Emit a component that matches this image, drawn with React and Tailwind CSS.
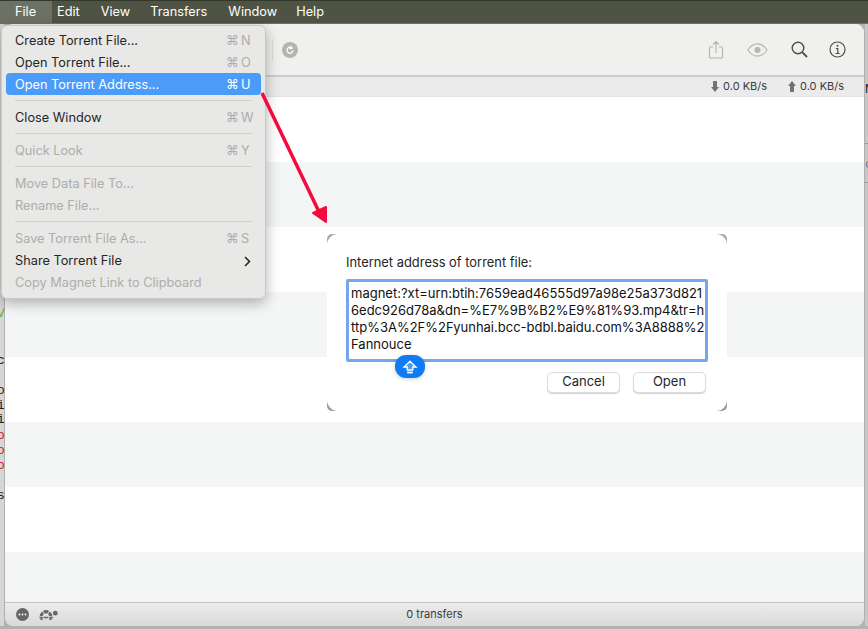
const font = '[font-family:Inter,"Liberation_Sans",sans-serif]';

const menuItems = [
  { label: 'Create Torrent File...', key: 'N' },
  { label: 'Open Torrent File...', key: 'O' },
  { label: 'Open Torrent Address...', key: 'U', active: true },
  { sep: true },
  { label: 'Close Window', key: 'W' },
  { sep: true },
  { label: 'Quick Look', key: 'Y', off: true },
  { sep: true },
  { label: 'Move Data File To...', off: true },
  { label: 'Rename File...', off: true },
  { sep: true },
  { label: 'Save Torrent File As...', key: 'S', off: true },
  { label: 'Share Torrent File', arrow: true },
  { label: 'Copy Magnet Link to Clipboard', off: true },
];

// glyph ends of the terminal window behind, only a few pixels show
const behindLeft = [
  { ch: 'V', gap: 283, color: 'text-[#6fae2c]' },
  { ch: 'c', gap: 33, color: 'text-[#222]' },
  { ch: 'o', gap: 16, color: 'text-[#222]' },
  { ch: 'i', gap: 1, color: 'text-[#222]' },
  { ch: 'i', gap: 0, color: 'text-[#222]' },
  { ch: 'o', gap: 2, color: 'text-[#d3102e]' },
  { ch: 'o', gap: 1, color: 'text-[#d3102e]' },
  { ch: 'o', gap: 1, color: 'text-[#d3102e]' },
  { ch: 's', gap: 16, color: 'text-[#222]' },
];

function MenuBar() {
  return (
    <div className="h-[23px] shrink-0 flex items-center bg-[#4e5344] border-t border-[#33382c] text-[12.75px] text-white">
      <span className="w-[52px] h-full flex items-center pl-[15px] bg-[#6d7163]">File</span>
      <span className="ml-[5px]">Edit</span>
      <span className="ml-[21px]">View</span>
      <span className="ml-[20px]">Transfers</span>
      <span className="ml-[21px]">Window</span>
      <span className="ml-[19px]">Help</span>
    </div>
  );
}

function FileMenu() {
  return (
    <div className="absolute left-[1px] top-[25px] w-[265px] h-[274px] pt-[3px] px-[4px] rounded-[6px] bg-[#e8e8e7] border border-[#c9c9c8] shadow-[0_4px_14px_rgba(0,0,0,0.3)] text-[12.75px] z-20">
      {menuItems.map((item, i) =>
        item.sep ? (
          <div key={i} className="h-[11px] flex items-center px-[9px]">
            <div className="h-px w-full bg-[#cfcfce]" />
          </div>
        ) : (
          <div
            key={i}
            className={`h-[22px] flex items-center justify-between pt-[2px] pl-[9px] pr-[5px] rounded-[4px] ${item.active ? 'bg-[#4a9cf8] text-white' : item.off ? 'text-[#adadac]' : 'text-[#262626]'}`}
          >
            <span>{item.label}</span>
            {item.key && (
              <span className={`flex w-[30px] ${item.active ? 'text-white' : 'text-[#adadac]'}`}>
                <span className="w-[15px]">⌘</span>
                <span>{item.key}</span>
              </span>
            )}
            {item.arrow && (
              <svg className="mr-[5px]" width="7" height="11" viewBox="0 0 7 11" fill="none" stroke="#262626" strokeWidth="1.6">
                <path d="M1 1l4.5 4.5L1 10" />
              </svg>
            )}
          </div>
        )
      )}
    </div>
  );
}

function Toolbar() {
  return (
    <div className="h-[53px] shrink-0 flex items-center bg-[#f0f0ef] border-b-2 border-[#cdcdcd]">
      <div className="ml-[267px] h-[22px] w-px bg-[#dcdcdb]" />
      <div className="ml-[9px] w-4 h-4 rounded-full bg-[#b4b4b3] flex items-center justify-center">
        <svg width="10" height="10" viewBox="0 0 10 10" fill="none" stroke="#fff" strokeWidth="1.2">
          <path d="M7.6 3.6A3 3 0 1 0 8 5.4M6 1l.6 2.4-2.3.5" />
        </svg>
      </div>
      <div className="ml-auto flex items-center">
        <svg width="16" height="20" viewBox="0 0 16 20" fill="none" stroke="#b6b6b5" strokeWidth="1.2">
          <path d="M5 7H2.5A1 1 0 0 0 1.5 8v9a1 1 0 0 0 1 1h11a1 1 0 0 0 1-1V8a1 1 0 0 0-1-1H11M8 13V1.5M5 4.500l3-3 3 3" />
        </svg>
        <svg className="ml-[22px]" width="23" height="14" viewBox="0 0 24 16" fill="none" stroke="#b6b6b5" strokeWidth="1.3">
          <path d="M1 8c3-4.500 7-7 11-7s8 2.500 11 7c-3 4.500-7 7-11 7s-8-2.500-11-7z" />
          <circle cx="12" cy="8" r="3.500" fill="#b6b6b5" stroke="none" />
        </svg>
        <svg className="ml-[22px]" width="17" height="17" viewBox="0 0 17 17" fill="none" stroke="#4d4d4d" strokeWidth="1.4">
          <circle cx="7" cy="7" r="5.800" />
          <path d="M11.200 11.200L16 16" strokeWidth="1.800" />
        </svg>
        <svg className="ml-[21px] mr-[18px]" width="17" height="17" viewBox="0 0 17 17" fill="none" stroke="#4d4d4d" strokeWidth="1.200">
          <circle cx="8.500" cy="8.500" r="7.500" />
          <circle cx="8.500" cy="4.800" r="1" fill="#4d4d4d" stroke="none" />
          <path d="M6.800 7.500h2v5M6.500 12.500h4.200" />
        </svg>
      </div>
    </div>
  );
}

function SpeedBar() {
  return (
    <div className="h-[20px] shrink-0 flex items-center justify-end gap-[21px] pr-[20px] bg-[#ebebeb] border-b border-[#e2e2e2] text-[11px] text-[#3c3c3c]">
      <span className="flex items-center gap-[4px]">
        <svg width="8" height="11" viewBox="0 0 8 11" fill="#737373"><path d="M2 0h4v6h2l-4 5-4-5h2z" /></svg>
        0.0 KB/s
      </span>
      <span className="flex items-center gap-[4px]">
        <svg width="8" height="11" viewBox="0 0 8 11" fill="#737373"><path d="M2 11h4V5h2L4 0 0 5h2z" /></svg>
        0.0 KB/s
      </span>
    </div>
  );
}

function Rows() {
  const rows = [0, 1, 2, 3, 4, 5, 6];
  return (
    <div className="flex-1 flex flex-col bg-[#f4f5f5] overflow-hidden">
      {rows.map((r) => (
        <div key={r} className={`h-[65px] shrink-0 ${r % 2 === 0 ? 'bg-white' : 'bg-[#f4f5f5]'}`} />
      ))}
    </div>
  );
}

function StatusBar() {
  return (
    <div className="h-[24px] shrink-0 relative flex items-center pl-[11px] bg-gradient-to-b from-[#ececec] to-[#d9d9d9] border-t border-[#c4c4c4] text-[11px] text-[#3c3c3c]">
      <svg width="13" height="13" viewBox="0 0 13 13">
        <circle cx="6.500" cy="6.500" r="6.500" fill="#666" />
        <circle cx="3.500" cy="6.500" r="0.900" fill="#fff" />
        <circle cx="6.500" cy="6.500" r="0.900" fill="#fff" />
        <circle cx="9.500" cy="6.500" r="0.900" fill="#fff" />
      </svg>
      <svg className="ml-[10px]" width="19" height="10" viewBox="0 0 19 10" fill="#666">
        <path d="M7 0c1.200 0 2.200.3 3 .9L8.300 3.400H5.500L4 .9C4.800.3 5.900 0 7 0z" />
        <path d="M3.200 1.500L4.800 4 3.600 6H.7C.9 4.200 1.800 2.600 3.200 1.500z" />
        <path d="M10.800 1.500c1.400 1.100 2.300 2.700 2.500 4.500H10.300L9 4z" />
        <path d="M4.500 6.700H9.300V8.300H4.500z" />
        <path d="M.5 6.700H3.700V8.300H.5z" />
        <path d="M10.200 6.700H14V8.300H10.200z" />
        <circle cx="16.300" cy="3.200" r="2.400" />
        <circle cx="2.500" cy="9.200" r="1.200" />
        <circle cx="11.500" cy="9.200" r="1.200" />
      </svg>
      <span className="absolute left-0 right-0 text-center">0 transfers</span>
    </div>
  );
}

function AddressSheet() {
  return (
    <div className="absolute left-[327px] top-[234px] w-[400px] h-[177px] z-10">
      <div className="absolute left-0 top-0 w-[11px] h-[11px] rounded-tl-[5px] bg-[#a8a8a8]" />
      <div className="absolute right-0 top-0 w-[11px] h-[11px] rounded-tr-[5px] bg-[#a8a8a8]" />
      <div className="absolute left-0 bottom-0 w-[11px] h-[11px] rounded-bl-[5px] bg-[#9a9a9a]" />
      <div className="absolute right-0 bottom-0 w-[11px] h-[11px] rounded-br-[5px] bg-[#9a9a9a]" />
      <div className="relative h-full rounded-[11px] bg-white pt-[21px] pl-[19px] pr-[19px] text-[12.9px] text-[#262626]">
        <div className="leading-[16px]">Internet address of torrent file:</div>
        <div className="mt-[8px] w-[362px] h-[83px] border-[3px] border-[#76a6ee] rounded-[2px] pl-[2px] pt-[3px] text-[13px] leading-[17px] text-[#111] whitespace-pre">
          {'magnet:?xt=urn:btih:7659ead46555d97a98e25a373d821\n6edc926d78a&dn=%E7%9B%B2%E9%81%93.mp4&tr=h\nttp%3A%2F%2Fyunhai.bcc-bdbl.baidu.com%3A8888%2\nFannouce'}
        </div>
        <div className="mt-[10px] flex justify-end gap-[13px] pr-[2px]">
          <button className="w-[73px] h-[21px] pb-[2px] rounded-[5px] bg-white border border-[#dcdcdc] shadow-[0_1px_1px_rgba(0,0,0,0.18)] text-[13px] leading-none text-[#262626]">Cancel</button>
          <button className="w-[73px] h-[21px] pb-[2px] rounded-[5px] bg-white border border-[#dcdcdc] shadow-[0_1px_1px_rgba(0,0,0,0.18)] text-[13px] leading-none text-[#262626]">Open</button>
        </div>
      </div>
      <div className="absolute left-[68px] top-[121px] w-[30px] h-[23px] rounded-[11px] bg-[#0f7bf5] flex items-center justify-center shadow-[0_1px_4px_rgba(0,0,0,0.2)]">
        <svg width="16" height="14" viewBox="0 0 16 14" fill="rgba(255,255,255,0.25)" stroke="#fff" strokeWidth="1.300">
          <path d="M8 1.200L14 7h-3.200v3H5.200V7H2z" />
          <path d="M5.200 12.500h5.600" strokeWidth="1.800" />
        </svg>
      </div>
    </div>
  );
}

function Arrow() {
  return (
    <svg className="absolute left-[255px] top-[88px] z-30" width="80" height="140" viewBox="0 0 80 140" fill="none">
      <path d="M7 5L67 130" stroke="#f50a3e" strokeWidth="3.5" />
      <path d="M58 125L71 119L71 134z" fill="#f50a3e" stroke="#f50a3e" strokeWidth="2" strokeLinejoin="round" />
    </svg>
  );
}

export default function App() {
  return (
    <div className={`relative w-[868px] h-[629px] overflow-hidden flex flex-col bg-[#b2b2b2] ${font}`}>
      <MenuBar />
      <div className="h-px shrink-0 bg-[#6f7263]" />
      <div className="flex-1 flex min-h-0 pb-[3px]">
        <div className="w-[4px] shrink-0 bg-[#d6d6d6] overflow-hidden flex flex-col items-end [font-family:'Liberation_Mono',monospace] text-[13px] leading-[14px]">
          {behindLeft.map((c, i) => (
            <div key={i} style={{ marginTop: c.gap }} className={`w-[8px] shrink-0 -mr-px ${c.color}`}>
              {c.ch}
            </div>
          ))}
        </div>
        <div className="flex-1 min-w-0 flex flex-col bg-white border-x border-[#b0b0b0] rounded-[9px] overflow-hidden">
          <Toolbar />
          <SpeedBar />
          <Rows />
          <StatusBar />
        </div>
        <div className="w-[3px] shrink-0 bg-[#c8c8c8] overflow-hidden flex flex-col [font-family:'Liberation_Mono',monospace] text-[13px] leading-[14px]">
          <div className="mt-[59px] w-[8px] shrink-0 text-[#222]">N</div>
          <div className="mt-[46px] h-px bg-[#9a9a9a] shrink-0" />
          <div className="mt-[14px] w-[8px] shrink-0 text-[#777]">c</div>
          <div className="mt-[10px] h-px bg-[#9a9a9a] shrink-0" />
        </div>
      </div>
      <FileMenu />
      <AddressSheet />
      <Arrow />
    </div>
  );
}
